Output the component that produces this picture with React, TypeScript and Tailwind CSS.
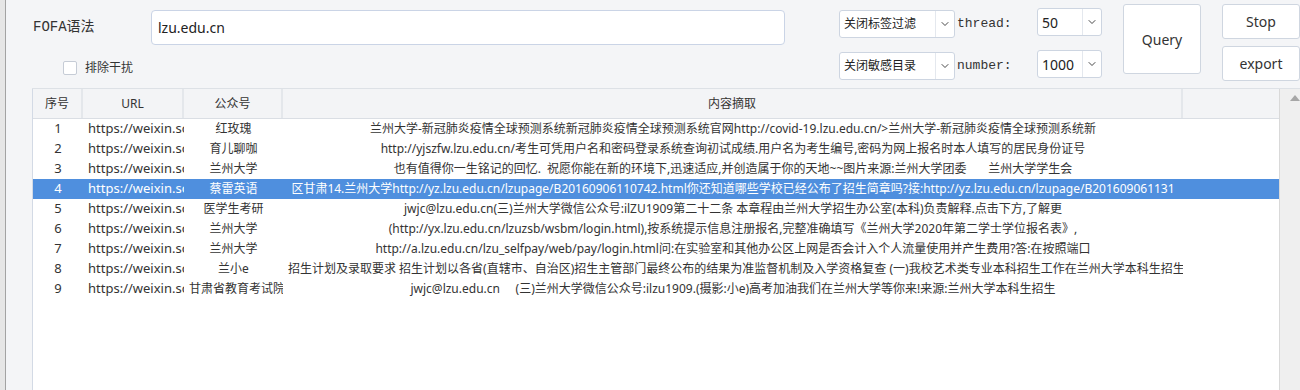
import { ChevronDown } from 'lucide-react';

const cjk = "font-['Noto_Sans','Noto_Sans_CJK_SC',sans-serif]";

const rows = [
  { no: '1', url: 'https://weixin.sogou.com', name: '红玫瑰', text: '兰州大学-新冠肺炎疫情全球预测系统新冠肺炎疫情全球预测系统官网http://covid-19.lzu.edu.cn/>兰州大学-新冠肺炎疫情全球预测系统新' },
  { no: '2', url: 'https://weixin.sogou.com', name: '育儿聊咖', text: 'http://yjszfw.lzu.edu.cn/考生可凭用户名和密码登录系统查询初试成绩.用户名为考生编号,密码为网上报名时本人填写的居民身份证号' },
  { no: '3', url: 'https://weixin.sogou.com', name: '兰州大学', text: '也有值得你一生铭记的回忆.  祝愿你能在新的环境下,迅速适应,并创造属于你的天地~~图片来源:兰州大学团委       兰州大学学生会' },
  { no: '4', url: 'https://weixin.sogou.com', name: '蔡雷英语', text: '区甘肃14.兰州大学http://yz.lzu.edu.cn/lzupage/B20160906110742.html你还知道哪些学校已经公布了招生简章吗?接:http://yz.lzu.edu.cn/lzupage/B201609061131', selected: true },
  { no: '5', url: 'https://weixin.sogou.com', name: '医学生考研', text: 'jwjc@lzu.edu.cn(三)兰州大学微信公众号:ilZU1909第二十二条 本章程由兰州大学招生办公室(本科)负责解释.点击下方,了解更' },
  { no: '6', url: 'https://weixin.sogou.com', name: '兰州大学', text: '(http://yx.lzu.edu.cn/lzuzsb/wsbm/login.html),按系统提示信息注册报名,完整准确填写《兰州大学2020年第二学士学位报名表》,' },
  { no: '7', url: 'https://weixin.sogou.com', name: '兰州大学', text: 'http://a.lzu.edu.cn/lzu_selfpay/web/pay/login.html问:在实验室和其他办公区上网是否会计入个人流量使用并产生费用?答:在按照端口' },
  { no: '8', url: 'https://weixin.sogou.com', name: '兰小e', text: '招生计划及录取要求 招生计划以各省(直辖市、自治区)招生主管部门最终公布的结果为准监督机制及入学资格复查 (一)我校艺术类专业本科招生工作在兰州大学本科生招生' },
  { no: '9', url: 'https://weixin.sogou.com', name: '甘肃省教育考试院', text: 'jwjc@lzu.edu.cn     (三)兰州大学微信公众号:ilzu1909.(摄影:小e)高考加油我们在兰州大学等你来!来源:兰州大学本科生招生' },
];

function Select({ value, w, textCls }: { value: string; w: string; textCls: string }) {
  return (
    <div className={`${w} h-[28px] bg-white border border-[#cdd5e1] rounded-[3px] flex items-stretch`}>
      <div className={`flex-1 flex items-center pl-[4px] ${textCls} text-[#222] overflow-hidden whitespace-nowrap`}>{value}</div>
      <div className="w-[19px] border-l border-[#e4e8ee] flex items-center justify-center">
        <ChevronDown size={12} strokeWidth={1.8} className="text-[#333]" />
      </div>
    </div>
  );
}

export default function App() {
  return (
    <div className={`w-[1300px] h-[390px] overflow-hidden flex bg-[#f4f5f7] ${cjk}`}>
      <div className="w-[6px] shrink-0 bg-[#e6e6e6] border-r border-[#a3a3a3]" />

      <div className="flex-1 flex flex-col min-w-0">
        {/* controls */}
        <div className="h-[88px] flex shrink-0">
          <div className="pl-[27px]">
            <div className="mt-[10px] flex items-center">
              <span className="w-[118px] text-[14px] text-[#333] font-['Liberation_Mono','Noto_Sans_CJK_SC',monospace]">FOFA语法</span>
              <div className="w-[634px] h-[35px] bg-white border border-[#cad4e6] rounded-[4px] flex items-center pl-[6px] text-[14px] text-[#222]">
                lzu.edu.cn
              </div>
            </div>
            <div className="mt-[14px] ml-[30px] flex items-center">
              <div className="w-[14px] h-[14px] bg-white border border-[#c6ccd6] rounded-[2px]" />
              <span className="ml-[8px] text-[12px] text-[#333]">排除干扰</span>
            </div>
          </div>

          <div className="ml-[54px] mt-[10px] flex flex-col gap-[14px]">
            <Select value="关闭标签过滤" w="w-[116px]" textCls="text-[12px]" />
            <Select value="关闭敏感目录" w="w-[116px]" textCls="text-[12px]" />
          </div>

          <div className="ml-[2px] mt-[10px] w-[80px] flex flex-col gap-[14px] font-['Liberation_Mono',monospace] text-[13px] text-[#333]">
            <div className="h-[28px] flex items-center">thread:</div>
            <div className="h-[28px] flex items-center">number:</div>
          </div>

          <div className="mt-[8px] flex flex-col gap-[14px]">
            <Select value="50" w="w-[65px]" textCls="text-[14px] pl-[2px]" />
            <Select value="1000" w="w-[65px]" textCls="text-[14px] pl-[2px]" />
          </div>

          <button className="ml-[21px] mt-[4px] w-[78px] h-[70px] bg-white border border-[#cfd6e0] rounded-[3px] text-[14px] text-[#333]">
            Query
          </button>

          <div className="ml-[21px] mt-[4px] flex flex-col gap-[7px]">
            <button className="w-[78px] h-[35px] bg-white border border-[#cfd6e0] rounded-[3px] text-[14px] text-[#333]">Stop</button>
            <button className="w-[78px] h-[35px] bg-white border border-[#cfd6e0] rounded-[3px] text-[14px] text-[#333]">export</button>
          </div>
        </div>

        {/* table */}
        <div className="flex-1 flex ml-[26px] border-t border-[#dde1e6]">
          <div className="w-[1254px] bg-white border-l border-[#d3dae5] flex flex-col text-[12px] text-[#333]">
            <div className="h-[30px] flex bg-[#f3f4f6] border-b border-[#dadee4] shrink-0">
              <div className="w-[50px] border-r-2 border-[#e4e7eb] flex items-center justify-center">序号</div>
              <div className="w-[101px] border-r-2 border-[#e4e7eb] flex items-center justify-center">URL</div>
              <div className="w-[99px] border-r-2 border-[#e4e7eb] flex items-center justify-center">公众号</div>
              <div className="w-[900px] border-r-2 border-[#e4e7eb] flex items-center justify-center">内容摘取</div>
              <div className="flex-1" />
            </div>
            {rows.map((r) => (
              <div
                key={r.no}
                className={`h-[20px] flex items-center whitespace-pre ${r.selected ? 'bg-[#4f8fde] text-white' : ''}`}
              >
                <div className="w-[50px] shrink-0 text-center text-[13px]">{r.no}</div>
                <div className="w-[101px] shrink-0 overflow-hidden pl-[5px] text-[13px]">{r.url}</div>
                <div className="w-[99px] shrink-0 overflow-hidden text-center px-[5px]">{r.name}</div>
                <div className="w-[900px] shrink-0 overflow-hidden text-center pl-[5px] pr-[5px]">{r.text}</div>
                <div className="flex-1" />
              </div>
            ))}
          </div>
          <div className="w-[1px] bg-[#d9d9d9]" />
          <div className="flex-1 bg-[#efefef] flex justify-center pt-[6px]">
            <div className="w-0 h-0 border-l-[5px] border-r-[5px] border-b-[6px] border-l-transparent border-r-transparent border-b-[#a6a6a6] ml-[10px]" />
          </div>
        </div>
      </div>
    </div>
  );
}
